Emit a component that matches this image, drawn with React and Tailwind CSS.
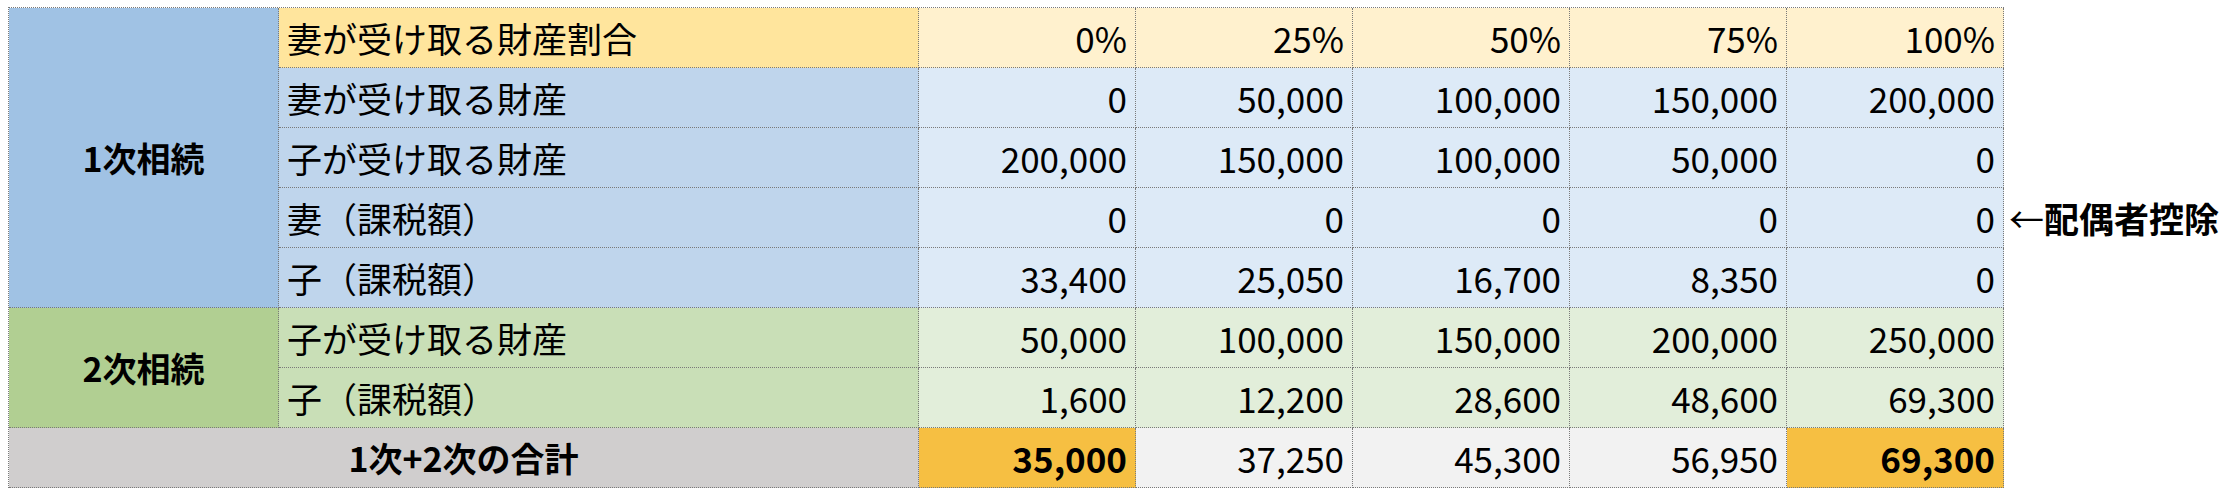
import React from "react";

const pcts = ["0%", "25%", "50%", "75%", "100%"];

// rows of the first and second inheritance
const first = [
  { label: "妻が受け取る財産", values: ["0", "50,000", "100,000", "150,000", "200,000"] },
  { label: "子が受け取る財産", values: ["200,000", "150,000", "100,000", "50,000", "0"] },
  { label: "妻（課税額）", values: ["0", "0", "0", "0", "0"], note: "←配偶者控除" },
  { label: "子（課税額）", values: ["33,400", "25,050", "16,700", "8,350", "0"] },
];

const second = [
  { label: "子が受け取る財産", values: ["50,000", "100,000", "150,000", "200,000", "250,000"] },
  { label: "子（課税額）", values: ["1,600", "12,200", "28,600", "48,600", "69,300"] },
];

const totals = [
  { v: "35,000", hi: true },
  { v: "37,250" },
  { v: "45,300" },
  { v: "56,950" },
  { v: "69,300", hi: true },
];

const cell = "border-r border-b border-dotted border-[#7a7a7a] flex items-center";
const num = cell + " justify-end pr-[8px]";
const lab = cell + " pl-[8px]";

export default function App() {
  return (
    <div
      className="w-[2236px] h-[500px] bg-white text-black pt-[7px] pl-[8px] flex"
      style={{ fontFamily: '"Noto Sans CJK JP", "Noto Sans", sans-serif' }}
    >
      <div className="grid grid-cols-[270px_640px_repeat(5,217px)] grid-rows-[repeat(8,60px)] border-t border-l border-dotted border-[#7a7a7a] text-[35px] leading-none h-fit">
        {/* 1次相続 */}
        <div className={cell + " row-span-5 justify-center bg-[#a0c2e4] font-bold text-[34px]"}>1次相続</div>
        <div className={lab + " bg-[#ffe59d]"}>妻が受け取る財産割合</div>
        {pcts.map((p) => (
          <div key={p} className={num + " bg-[#fff1ce]"}>{p}</div>
        ))}
        {first.map((r) => (
          <React.Fragment key={r.label}>
            <div className={lab + " bg-[#bfd5ec]"}>{r.label}</div>
            {r.values.map((v, i) => (
              <div key={i} className={num + " bg-[#ddeaf7] relative"}>
                {v}
                {r.note && i === 4 && (
                  <span className="absolute left-full ml-[6px] whitespace-nowrap font-bold text-[35px]">
                    <span className="font-normal">←</span>配偶者控除
                  </span>
                )}
              </div>
            ))}
          </React.Fragment>
        ))}

        {/* 2次相続 */}
        <div className={cell + " row-span-2 justify-center bg-[#b1cf92] font-bold text-[34px]"}>2次相続</div>
        {second.map((r, ri) => (
          <React.Fragment key={ri}>
            <div className={lab + " bg-[#c9dfb7]"}>{r.label}</div>
            {r.values.map((v, i) => (
              <div key={i} className={num + " bg-[#e2eeda]"}>{v}</div>
            ))}
          </React.Fragment>
        ))}

        {/* 合計 */}
        <div className={cell + " col-span-2 justify-center bg-[#d0cece] font-bold text-[34px]"}>1次+2次の合計</div>
        {totals.map((t, i) => (
          <div key={i} className={num + (t.hi ? " bg-[#f6bf42] font-bold" : " bg-[#f2f2f2]")}>{t.v}</div>
        ))}
      </div>
    </div>
  );
}
